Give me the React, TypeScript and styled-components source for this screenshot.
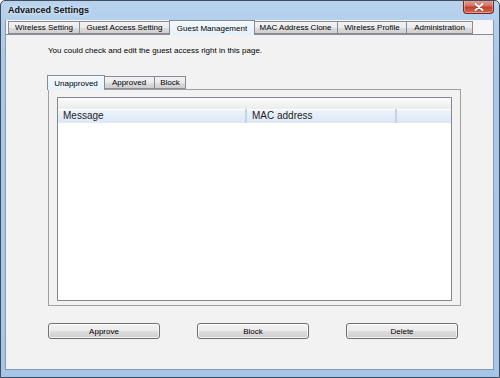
import React from "react"
import styled, { createGlobalStyle } from "styled-components"

const Global = createGlobalStyle`
  html, body {
    margin: 0;
    padding: 0;
    background: #ffffff;
  }
  * {
    box-sizing: border-box;
  }
`

const FONT = `"Liberation Sans", Arial, sans-serif`

const Window = styled.div`
  width: 500px;
  height: 378px;
  display: flex;
  flex-direction: column;
  background: linear-gradient(#b9d3ee, #a9c8ea 60px, #a6c6e9);
  border: 1px solid #3f4c5c;
  border-radius: 5px 5px 0 0;
  font-family: ${FONT};
  font-size: 8px;
  color: #000;
  overflow: hidden;
`

const TitleBar = styled.div`
  height: 19px;
  display: flex;
  justify-content: space-between;
  align-items: flex-start;
  flex-shrink: 0;
`

const Title = styled.div`
  padding-left: 7px;
  line-height: 19px;
  font-size: 9px;
  font-weight: bold;
  color: #111;
  text-shadow: 0 0 4px rgba(255, 255, 255, 0.9);
`

const CloseButton = styled.div`
  width: 31px;
  height: 14px;
  margin-right: 5px;
  margin-top: -1px;
  display: flex;
  align-items: center;
  justify-content: center;
  border: 1px solid #6e2a26;
  border-top: none;
  border-radius: 0 0 4px 4px;
  background: linear-gradient(#e6a69b, #d4705f 45%, #c1402c 55%, #d46a52);
  box-shadow: inset 0 0 0 1px rgba(255, 220, 210, 0.45);
`

const Panel = styled.div`
  flex: 1;
  margin: 0 5px 7px 4px;
  display: flex;
  flex-direction: column;
  background: #f2f2f2;
  border: 1px solid #8a99ac;
  border-top: none;
`

const TabRow = styled.div`
  display: flex;
  align-items: flex-end;
  height: 14px;
  padding-left: 2px;
  background: #f6f6f6;
  position: relative;
  z-index: 1;
`

const Tab = styled.div<{ $w: number; $active?: boolean }>`
  width: ${(p) => p.$w}px;
  height: ${(p) => (p.$active ? 15 : 13)}px;
  margin-bottom: ${(p) => (p.$active ? -1 : 0)}px;
  margin-left: ${(p) => (p.$active ? -1 : 0)}px;
  margin-right: ${(p) => (p.$active ? -1 : 0)}px;
  display: flex;
  align-items: center;
  justify-content: center;
  white-space: nowrap;
  border: 1px solid #898c95;
  border-bottom: ${(p) => (p.$active ? "none" : "1px solid #898c95")};
  border-left-width: ${(p) => (p.$active ? 1 : 0)}px;
  background: ${(p) =>
    p.$active
      ? "linear-gradient(#f3f9fe, #e4f1fb)"
      : "linear-gradient(#f2f2f2 0%, #ebebeb 50%, #dddddd 51%, #cfcfcf 100%)"};
  position: relative;
  z-index: ${(p) => (p.$active ? 2 : 1)};
  &:first-child {
    border-left-width: 1px;
  }
`

const Body = styled.div`
  flex: 1;
  border-top: 1px solid #898c95;
  padding: 10px 0 0 42px;
  display: flex;
  flex-direction: column;
  align-items: flex-start;
`

const Intro = styled.div`
  line-height: 11px;
  height: 11px;
`

const SubTabRow = styled.div`
  display: flex;
  align-items: flex-end;
  height: 13px;
  margin-top: 20px;
  position: relative;
  z-index: 1;
`

const SubPanel = styled.div`
  width: 413px;
  height: 217px;
  padding: 7px 8px 4px 8px;
  border: 1px solid #a0a0a0;
  background: #f2f2f2;
`

const ListBox = styled.div`
  width: 395px;
  height: 204px;
  border: 1px solid #828790;
  background: #ffffff;
  display: flex;
  flex-direction: column;
`

const ListTopBand = styled.div`
  height: 11px;
  background: linear-gradient(#fbfbfb, #ececec);
`

const HeaderRow = styled.div`
  display: flex;
  height: 14px;
`

const HeaderCell = styled.div<{ $w?: number }>`
  width: ${(p) => (p.$w ? `${p.$w}px` : "auto")};
  flex: ${(p) => (p.$w ? "none" : 1)};
  height: 14px;
  padding-left: 5px;
  line-height: 14px;
  font-size: 10px;
  color: #1e1e1e;
  border-right: ${(p) => (p.$w ? "2px solid #c5d2e2" : "none")};
  background: linear-gradient(#eef4fb, #dde8f5);
  box-shadow: inset 0 1px 0 #ffffff;
  white-space: nowrap;
`

const ButtonRow = styled.div`
  display: flex;
  gap: 37px;
  margin-top: 17px;
`

const Button = styled.button`
  width: 112px;
  height: 16px;
  padding: 0;
  border: 1px solid #707070;
  border-radius: 3px;
  font-family: ${FONT};
  font-size: 8px;
  color: #000;
  background: linear-gradient(#f2f2f2 0%, #ebebeb 50%, #dddddd 51%, #cfcfcf 100%);
  box-shadow: inset 0 0 0 1px rgba(255, 255, 255, 0.7);
`

const mainTabs = [
  { label: "Wireless Setting", w: 72 },
  { label: "Guest Access Setting", w: 90 },
  { label: "Guest Management", w: 86, active: true },
  { label: "MAC Address Clone", w: 84 },
  { label: "Wireless Profile", w: 69 },
  { label: "Administration", w: 66 },
]

const subTabs = [
  { label: "Unapproved", w: 58, active: true },
  { label: "Approved", w: 51 },
  { label: "Block", w: 31 },
]

const CloseIcon = () => (
  <svg width="10" height="8" viewBox="0 0 10 8">
    <path d="M1.5 1 L8.5 7 M8.5 1 L1.5 7" stroke="#5a2019" strokeWidth="3" strokeLinecap="round" opacity="0.35" />
    <path d="M1.5 1 L8.5 7 M8.5 1 L1.5 7" stroke="#ffffff" strokeWidth="2" strokeLinecap="round" />
  </svg>
)

export default function App() {
  return (
    <>
      <Global />
      <Window>
        <TitleBar>
          <Title>Advanced Settings</Title>
          <CloseButton>
            <CloseIcon />
          </CloseButton>
        </TitleBar>
        <Panel>
          <TabRow>
            {mainTabs.map((t) => (
              <Tab key={t.label} $w={t.w} $active={t.active}>
                {t.label}
              </Tab>
            ))}
          </TabRow>
          <Body>
            <Intro>You could check and edit the guest access right in this page.</Intro>
            <SubTabRow>
              {subTabs.map((t) => (
                <Tab key={t.label} $w={t.w} $active={t.active}>
                  {t.label}
                </Tab>
              ))}
            </SubTabRow>
            <SubPanel>
              <ListBox>
                <ListTopBand />
                <HeaderRow>
                  <HeaderCell $w={189}>Message</HeaderCell>
                  <HeaderCell $w={150}>MAC address</HeaderCell>
                  <HeaderCell />
                </HeaderRow>
              </ListBox>
            </SubPanel>
            <ButtonRow>
              <Button>Approve</Button>
              <Button>Block</Button>
              <Button>Delete</Button>
            </ButtonRow>
          </Body>
        </Panel>
      </Window>
    </>
  )
}
